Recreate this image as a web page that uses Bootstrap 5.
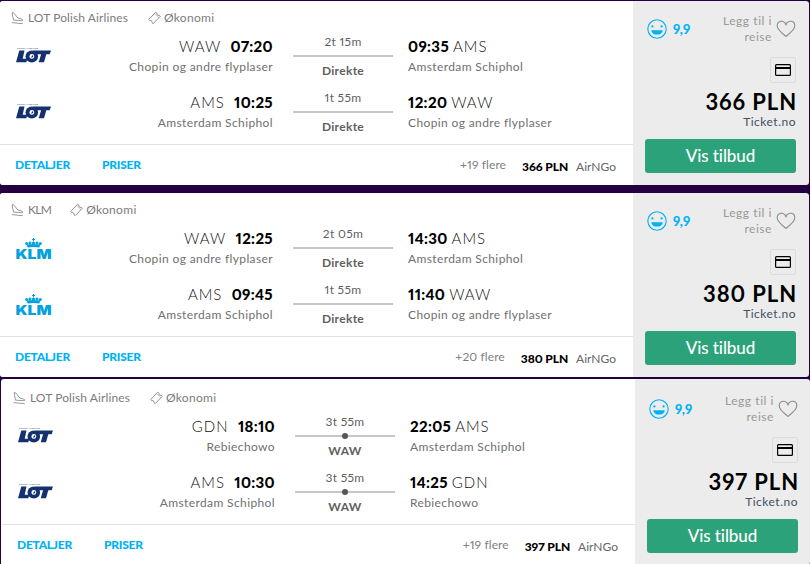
<!DOCTYPE html>
<html lang="no">
<head>
  <meta charset="UTF-8">
  <meta name="viewport" content="width=device-width, initial-scale=1.0">
  <title>Flyreiser</title>
  <link href="https://cdn.jsdelivr.net/npm/bootstrap@5.3.0/dist/css/bootstrap.min.css" rel="stylesheet">
  <style>
    body {
      font-family: Lato, "Open Sans", sans-serif;
      font-size: 12px;
      line-height: 16px;
      color: #666;
      background: #fff;
      overflow: hidden;
      font-variant-numeric: proportional-nums;
    }
    svg { display: block; flex: none; }
    .results { width: 810px; height: 564px; background: #230040; overflow: hidden; padding-top: 1px; }
    .trip { width: 809px; height: 184px; background: #ececec; border-radius: 3px; overflow: hidden; margin-bottom: 8px; }
    .trip-tight { margin-bottom: 2px; }
    .trip-shift { width: 809px; height: 186px; margin: 0 0 0 1px; padding-top: 2px; background: linear-gradient(90deg, #fff 634px, #ececec 634px); }
    .trip-shift .trip-main { width: 634px; padding-left: 1px; }
    .trip-main { width: 633px; background: #fff; flex: none; }
    .trip-meta { height: 34px; padding: 9px 0 0 11px; color: #7c7c7c; letter-spacing: .1px; }
    .meta-item { height: 16px; gap: 4px; margin-right: 20px; }
    .meta-klm { letter-spacing: -.7px; margin-right: 19px; }
    .meta-cabin { gap: 3px; letter-spacing: .3px; }
    .trip-leg { display: grid; grid-template-columns: 61px 212px 20px 100px 15px 1fr; height: 56px; }
    .leg-logo { padding: 12px 0 0 16px; }
    .leg-logo-klm { padding-top: 11px; }
    .leg-time { font-size: 15px; line-height: 22px; color: #000; font-weight: 900; letter-spacing: .35px; }
    .leg-code { font-weight: 300; color: #111; letter-spacing: 1px; }
    .leg-place { line-height: 20px; letter-spacing: .38px; color: #707070; }
    .leg-mid { line-height: 14px; color: #5f5f5f; letter-spacing: .3px; }
    .leg-line { height: 2px; background: #c8c8c8; margin: 6px 0 7px; }
    .leg-stop { width: 6px; height: 6px; border-radius: 50%; background: #555; margin-top: -2px; }
    .trip-foot { height: 41px; margin-top: -3px; border-top: 1px solid #dfe2e2; padding: 0 17px 0 15px; }
    .foot-link { color: #00b2f5; font-weight: 900; letter-spacing: -.25px; text-decoration: none; margin-right: 32px; }
    .foot-more { color: #808080; letter-spacing: .1px; }
    .foot-price { color: #000; font-weight: 900; letter-spacing: -.1px; }
    .trip-side { width: 176px; flex: none; padding: 12px 13px 12px 12px; }
    .side-top { height: 32px; margin-bottom: 12px; padding-left: 2px; }
    .score { color: #00b2f5; font-weight: 900; font-size: 13px; padding-left: 2px; letter-spacing: .2px; }
    .save-trip { color: #999; width: 62px; letter-spacing: .55px; }
    .pay-box { width: 26px; height: 26px; border: 1px solid #dcdcdc; border-radius: 2px; }
    .trip-price { font-size: 22px; line-height: 26px; font-weight: 700; color: #000; margin-top: 6px; letter-spacing: .9px; margin-right: -1px; }
    .vendor { color: #42505f; line-height: 14px; letter-spacing: .5px; }
    .btn-offer { background: #2ca27a; color: #fff; font-size: 17px; font-weight: 500; line-height: 34px; border-radius: 3px; padding: 0; border: 0; height: 34px; width: 151px; letter-spacing: -.1px; }
  </style>
</head>
<body>
  <svg class="d-none">
    <symbol id="plane" viewBox="0 0 14 14">
      <path d="M1.200 1.200l1.700.3 4.600 5.600 4.400 1.200c1.200.6 1 1.600.1 1.600L2.600 9.300zM.8 12l11.900 1.100" fill="none" stroke="#777" stroke-width=".8" stroke-linejoin="round"/>
    </symbol>
    <symbol id="ticket" viewBox="0 0 14 14">
      <path d="M.8 8.600L8.300.8l1.500 1.300-.1 1.200 1.200.9 1.100-.2 1.200 1.200-7.600 7.900-1.400-1.200.1-1.200-1.300-1-1.100.2zM7.200 2.600l.9.800m1.100 1l.9.800m.8.700l.6.500" fill="none" stroke="#777" stroke-width=".9" stroke-linejoin="round"/>
    </symbol>
    <symbol id="smile" viewBox="0 0 20 20">
      <circle cx="10" cy="10" r="9.200" fill="none" stroke="#00b2f5" stroke-width="1.100"/>
      <circle cx="5.400" cy="7.400" r="1.100" fill="#00b2f5"/>
      <circle cx="14.600" cy="7.400" r="1.100" fill="#00b2f5"/>
      <path d="M4.200 11.200h11.600c-.3 3-2.700 4.400-5.800 4.400s-5.500-1.400-5.800-4.400z" fill="#00b2f5"/>
    </symbol>
    <symbol id="heart" viewBox="0 0 20 18">
      <path d="M10 16.400C7 14 1.200 9.800 1.200 5.700 1.200 3 3 1.300 5.400 1.300c2.200 0 3.800 1.400 4.600 3.400.8-2 2.400-3.400 4.600-3.400 2.400 0 4.200 1.700 4.200 4.400 0 4.100-5.800 8.300-8.800 10.700z" fill="none" stroke="#8c8c8c" stroke-width="1.100"/>
    </symbol>
    <symbol id="card-icon" viewBox="0 0 16 12">
      <path d="M1.500 .6h13q.9 0 .9.9v9q0 .9-.9.900h-13q-.9 0-.9-.9v-9q0-.9.900-.9z" fill="none" stroke="#000" stroke-width="1.200"/>
      <path d="M0 3h16v2H0z"/>
    </symbol>
    <symbol id="lot" viewBox="0 0 36 16">
      <path d="M3.300 3.500h5.200L6.700 11.700h4.500l-.8 3.600H0z" fill="#14306f"/>
      <ellipse cx="15.800" cy="9.400" rx="6.300" ry="6" fill="#14306f"/>
      <path d="M17 3.500h18l-1.300 3.800h-3.400L28 15.300h-5.300l2.400-8H20z" fill="#14306f"/>
      <circle cx="15.800" cy="9.400" r="2.400" fill="#fff"/>
      <path d="M15 10.700l1.400-2.900.9 2.200z" fill="#14306f"/>
      <text x="1" y="2.300" font-family="Lato" font-size="2.400" font-weight="700" fill="#4a6291" textLength="21">POLISH AIRLINES</text>
    </symbol>
    <symbol id="klm" viewBox="0 0 36 22">
      <g fill="#00a1de">
        <path d="M17 0h1v1.100h1.100v1h-1.100v1.200h-1V2.100h-1.100v-1H17z"/>
        <circle cx="17.500" cy="5" r="1.600"/><circle cx="14" cy="4.900" r="1.500"/><circle cx="21" cy="4.900" r="1.500"/>
        <circle cx="10.700" cy="5.500" r="1.500"/><circle cx="24.300" cy="5.500" r="1.500"/>
        <path d="M10.600 6.600q6.900-1.200 13.800 0l-1.100 2.900q-5.800-.9-11.600 0z"/>
        <text x="-.5" y="20.800" font-family="Inter" font-size="12.800" font-weight="900" textLength="36" lengthAdjust="spacingAndGlyphs">KLM</text>
      </g>
    </symbol>
  </svg>
  <main class="results" id="results"></main>

  <script>
    const trips = [
      { airline: "LOT Polish Airlines", logo: "lot", price: "366 PLN", more: "+19 flere", cls: "", legs: [
        ["WAW", "07:20", "Chopin og andre flyplaser", "2t 15m", "Direkte", "09:35", "AMS", "Amsterdam Schiphol"],
        ["AMS", "10:25", "Amsterdam Schiphol", "1t 55m", "Direkte", "12:20", "WAW", "Chopin og andre flyplaser"]] },
      { airline: "KLM", logo: "klm", price: "380 PLN", more: "+20 flere", cls: "trip-tight", legs: [
        ["WAW", "12:25", "Chopin og andre flyplaser", "2t 05m", "Direkte", "14:30", "AMS", "Amsterdam Schiphol"],
        ["AMS", "09:45", "Amsterdam Schiphol", "1t 55m", "Direkte", "11:40", "WAW", "Chopin og andre flyplaser"]] },
      { airline: "LOT Polish Airlines", logo: "lot", price: "397 PLN", more: "+19 flere", cls: "trip-shift", legs: [
        ["GDN", "18:10", "Rebiechowo", "3t 55m", "WAW", "22:05", "AMS", "Amsterdam Schiphol"],
        ["AMS", "10:30", "Amsterdam Schiphol", "3t 55m", "WAW", "14:25", "GDN", "Rebiechowo"]] }
    ];

    function icon(id, w, h) {
      return `<svg width="${w}" height="${h}"><use href="#${id}"/></svg>`;
    }

    function legHtml(leg, logo) {
      const [from, dep, fromName, time, stop, arr, to, toName] = leg;
      return `
        <div class="trip-leg">
          <div class="leg-logo leg-logo-${logo}">${logo === "klm" ? icon("klm", 36, 22) : icon("lot", 36, 16)}</div>
          <div class="text-end">
            <div class="leg-time"><span class="leg-code me-2">${from}</span>&#8202;${dep}</div>
            <div class="leg-place">${fromName}</div>
          </div>
          <div></div>
          <div class="leg-mid text-center">
            <div>${time}</div>
            <div class="leg-line d-flex justify-content-center">${stop === "Direkte" ? "" : '<span class="leg-stop"></span>'}</div>
            <div class="fw-bold">${stop}</div>
          </div>
          <div></div>
          <div>
            <div class="leg-time">${arr} <span class="leg-code">${to}</span></div>
            <div class="leg-place">${toName}</div>
          </div>
        </div>`;
    }

    document.getElementById("results").innerHTML = trips.map(t => `
      <article class="trip d-flex ${t.cls}">
        <div class="trip-main">
          <div class="trip-meta d-flex">
            <div class="meta-item meta-${t.logo} d-flex align-items-center">${icon("plane", 13, 14)}<span>${t.airline}</span></div>
            <div class="meta-item meta-cabin d-flex align-items-center">${icon("ticket", 13, 14)}<span>Økonomi</span></div>
          </div>
          ${t.legs.map(l => legHtml(l, t.logo)).join("")}
          <div class="trip-foot d-flex align-items-center">
            <a class="foot-link" href="#">DETALJER</a>
            <a class="foot-link" href="#">PRISER</a>
            <span class="ms-auto foot-more">${t.more}</span>
            <span class="foot-price ms-3 pt-1">${t.price}</span>
            <span class="foot-vendor ms-2 pt-1">AirNGo</span>
          </div>
        </div>
        <div class="trip-side d-flex flex-column align-items-end">
          <div class="side-top d-flex align-items-center w-100">
            ${icon("smile", 20, 20)}<span class="score ms-1">9,9</span>
            <span class="save-trip ms-auto text-end">Legg til i reise</span>
            <span class="ms-1">${icon("heart", 20, 18)}</span>
          </div>
          <div class="pay-box d-flex align-items-center justify-content-center">${icon("card-icon", 16, 12)}</div>
          <div class="trip-price">${t.price}</div>
          <div class="vendor">Ticket.no</div>
          <button class="btn btn-offer mt-auto">Vis tilbud</button>
        </div>
      </article>`).join("");
  </script>
  <script src="https://cdn.jsdelivr.net/npm/bootstrap@5.3.0/dist/js/bootstrap.bundle.min.js"></script>
</body>
</html>
